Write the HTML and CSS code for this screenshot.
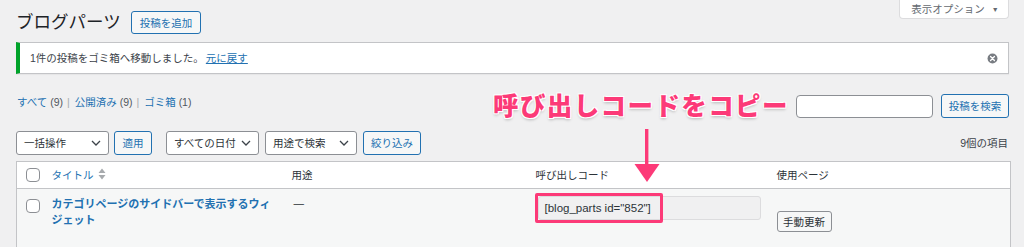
FILE: index.html
```html
<!DOCTYPE html>
<html lang="ja">
<head>
<meta charset="utf-8">
<title>ブログパーツ</title>
<link rel="stylesheet" href="styles.css">
</head>
<body>
<div class="page">
  <div class="top">
    <div class="title-area">
      <h1 class="page-title">ブログパーツ</h1>
      <a class="btn btn-outline">投稿を追加</a>
    </div>
    <div class="screen-tab">表示オプション <span class="caret">▼</span></div>
  </div>

  <div class="notice">
    <p>1件の投稿をゴミ箱へ移動しました。<a class="link-under">元に戻す</a></p>
    <span class="dismiss">
      <svg width="11" height="11" viewBox="0 0 20 20"><circle cx="10" cy="10" r="9" fill="#787c82"/><path d="M6.5 6.5l7 7M13.5 6.5l-7 7" stroke="#fff" stroke-width="2.4" stroke-linecap="round"/></svg>
    </span>
  </div>

  <div class="row-views">
    <ul class="subsubsub">
      <li><a>すべて</a> <span class="count">(9)</span> <span class="sep">|</span></li>
      <li><a>公開済み</a> <span class="count">(9)</span> <span class="sep">|</span></li>
      <li><a>ゴミ箱</a> <span class="count">(1)</span></li>
    </ul>
    <div class="search-box">
      <div class="search-input"></div>
      <a class="btn btn-outline btn-search">投稿を検索</a>
    </div>
  </div>

  <div class="tablenav">
    <div class="actions">
      <div class="select sel-bulk"><span>一括操作</span><svg class="chev" width="10" height="6" viewBox="0 0 10 6"><path d="M1 1l4 4 4-4" fill="none" stroke="#3c434a" stroke-width="1.3"/></svg></div>
      <a class="btn btn-outline btn-apply">適用</a>
      <div class="select sel-date"><span>すべての日付</span><svg class="chev" width="10" height="6" viewBox="0 0 10 6"><path d="M1 1l4 4 4-4" fill="none" stroke="#3c434a" stroke-width="1.3"/></svg></div>
      <div class="select sel-use"><span>用途で検索</span><svg class="chev" width="10" height="6" viewBox="0 0 10 6"><path d="M1 1l4 4 4-4" fill="none" stroke="#3c434a" stroke-width="1.3"/></svg></div>
      <a class="btn btn-outline btn-filter">絞り込み</a>
    </div>
    <div class="num-items">9個の項目</div>
  </div>

  <table class="list">
    <colgroup>
      <col class="c-cb"><col class="c-title"><col class="c-use"><col class="c-code"><col class="c-page">
    </colgroup>
    <thead>
      <tr>
        <th class="cb"><span class="checkbox"></span></th>
        <th class="th-title"><a>タイトル</a><svg class="sort" width="8" height="12" viewBox="0 0 8 12"><path d="M4 0.5L7.5 5H0.5z M4 11.5L0.5 7h7z" fill="#a7aaad"/></svg></th>
        <th>用途</th>
        <th>呼び出しコード</th>
        <th>使用ページ</th>
      </tr>
    </thead>
    <tbody>
      <tr>
        <td class="cb"><span class="checkbox"></span></td>
        <td class="row-title"><a>カテゴリページのサイドバーで表示するウィジェット</a></td>
        <td class="dash">—</td>
        <td class="code"><div class="code-input">[blog_parts id="852"]</div></td>
        <td class="pages"><a class="btn btn-gray">手動更新</a></td>
      </tr>
    </tbody>
  </table>
</div>

<div class="callout">呼び出しコードをコピー</div>
<svg class="arrow" width="26" height="56" viewBox="0 0 26 56"><rect x="11" y="0" width="3.4" height="38" fill="#fc3a78"/><path d="M0.5 35H25.5L13 53z" fill="#fc3a78"/></svg>
<div class="highlight"></div>
</body>
</html>
```

FILE: styles.css
```css
* { box-sizing: border-box; }
html, body { margin: 0; padding: 0; }
body {
  background: #f0f0f1;
  color: #3c434a;
  font-family: "Liberation Sans", "Noto Sans CJK JP", sans-serif;
  font-size: 10.5px;
  line-height: 14px;
  width: 1024px;
  height: 247px;
  overflow: hidden;
  position: relative;
}
a { color: #2271b1; text-decoration: none; }
.page { padding: 0 15px 0 16px; }

.top { display: flex; justify-content: space-between; align-items: flex-start; height: 38px; }
.title-area { display: flex; align-items: center; gap: 10px; margin-top: 11px; height: 23px; }
.page-title { margin: 0; font-size: 17.5px; font-weight: 400; color: #1d2327; line-height: 23px; }
.btn {
  display: inline-flex; align-items: center; justify-content: center;
  border-radius: 3px; font-size: 10.5px; line-height: 14px; white-space: nowrap;
}
.btn-outline { border: 1px solid #2271b1; color: #2271b1; background: #f6f7f7; height: 23px; padding: 0 8px; }
.screen-tab {
  width: 110px; height: 19px; background: #fff; border: 1px solid #dcdcde; border-top: none;
  border-radius: 0 0 4px 4px; color: #646970; font-size: 10.5px; line-height: 18px;
  text-align: center; padding-left: 2px;
}
.caret { font-size: 7px; margin-left: 4px; position: relative; top: -1px; }

.notice {
  margin-top: 4px; height: 32px; background: #fff;
  border: 1px solid #c3c4c7; border-left: 4px solid #00a32a;
  box-shadow: 0 1px 1px rgba(0,0,0,.04);
  display: flex; align-items: center; justify-content: space-between;
  padding: 0 10px 0 10px;
}
.notice p { margin: 0; color: #3c434a; }
.link-under { text-decoration: underline; margin-left: 2px; }
.dismiss { display: flex; }

.row-views { display: flex; justify-content: space-between; align-items: flex-start; margin-top: 20px; height: 24px; }
.subsubsub { list-style: none; margin: 1px 0 0 1px; padding: 0; display: flex; gap: 4px; color: #646970; }
.subsubsub li { white-space: nowrap; }
.count { color: #50575e; }
.sep { color: #a7aaad; margin: 0 1px; }
.search-box { display: flex; gap: 8px; align-items: center; }
.search-input { width: 137px; height: 23px; background: #fff; border: 1px solid #8c8f94; border-radius: 4px; }
.btn-search { height: 24px; width: 68px; padding: 0; }

.tablenav { display: flex; justify-content: space-between; align-items: center; margin-top: 13px; height: 24px; }
.actions { display: flex; align-items: center; }
.select {
  height: 24px; background: #fff; border: 1px solid #8c8f94; border-radius: 3px;
  display: flex; align-items: center; justify-content: space-between;
  padding: 0 7px 0 7px; color: #2c3338;
}
.sel-bulk { width: 93px; }
.btn-apply { width: 38px; height: 24px; padding: 0; margin-left: 5px; }
.sel-date { width: 93px; margin-left: 14px; }
.sel-use { width: 92px; margin-left: 6px; }
.btn-filter { width: 58px; height: 24px; padding: 0; margin-left: 6px; }
.num-items { color: #3c434a; padding-right: 1px; }

.list {
  margin-top: 6px; width: 994px; border-collapse: collapse; table-layout: fixed;
  background: #fff; border: 1px solid #c3c4c7;
}
.c-cb { width: 25px; }
.c-title { width: 240px; }
.c-use { width: 244px; }
.c-code { width: 241px; }
.c-page { width: 244px; }
.list th {
  height: 27px; text-align: left; font-weight: 400; color: #2c3338;
  padding: 0 10px; border-bottom: 1px solid #c3c4c7; vertical-align: middle;
}
.list th.cb, .list td.cb { padding: 0 0 0 9px; }
.checkbox {
  display: block; width: 14px; height: 14px; background: #fff;
  border: 1px solid #8c8f94; border-radius: 4px;
}
.th-title a { color: #2271b1; }
.sort { margin-left: 4px; vertical-align: -1px; }
.list tbody tr { background: #f6f7f7; }
.list td { height: 60px; vertical-align: top; padding: 7px 10px 0 10px; color: #2c3338; }
.list td.cb { padding-top: 10px; }
.row-title { font-size: 11px; line-height: 16px; font-weight: 700; }
.row-title a { color: #2271b1; }
.dash { padding-left: 12px !important; }
.list td.code { padding-left: 12px; }
.code-input {
  width: 223px; height: 24px; background: #f0f0f1; border: 1px solid #dcdcde; border-radius: 3px;
  font-size: 11.5px; line-height: 22px; padding-left: 6px; color: #2c3338;
  font-family: "Liberation Sans", sans-serif;
}
.pages { padding-top: 22px !important; }
.btn-gray { border: 1px solid #8c8f94; background: #f6f7f7; color: #2c3338; height: 21px; width: 55px; padding: 0; border-radius: 3px; font-size: 10.5px; }

.callout {
  position: absolute; left: 493px; top: 86px;
  font-family: "Noto Sans CJK JP", sans-serif; font-weight: 900;
  font-size: 25.5px; line-height: 36px; color: #fc3a78; letter-spacing: 1.4px;
  text-shadow: 0 0 2px #fff, 0 0 2px #fff, 1px 1px 0 #fff, -1px -1px 0 #fff, 1px -1px 0 #fff, -1px 1px 0 #fff, 0 2px 3px rgba(0,0,0,.25);
  white-space: nowrap;
}
.arrow { position: absolute; left: 634px; top: 129px; }
.highlight {
  position: absolute; left: 535px; top: 193px; width: 128px; height: 30px;
  border: 3px solid #fc3a78; border-radius: 2px;
}
```
